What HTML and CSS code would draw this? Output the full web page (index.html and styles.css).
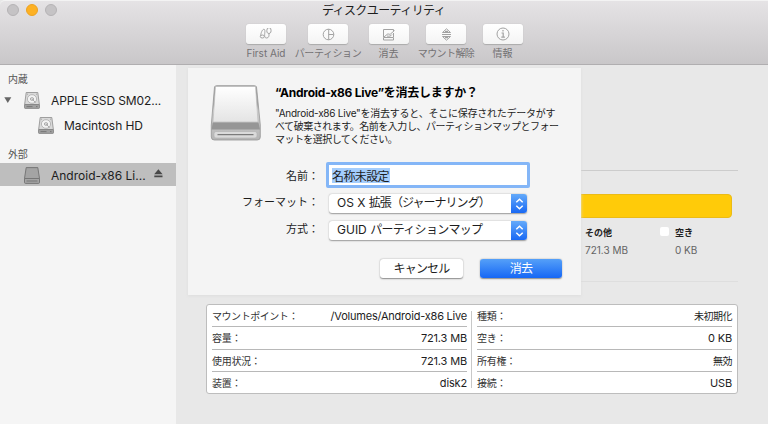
FILE: index.html
```html
<!DOCTYPE html>
<html lang="ja">
<head>
<meta charset="utf-8">
<title>ディスクユーティリティ</title>
<link rel="stylesheet" href="styles.css">
</head>
<body>
<svg class="defs" width="0" height="0">
  <defs>
    <linearGradient id="metal" x1="0" y1="0" x2="0" y2="1"><stop offset="0" stop-color="#fff"/><stop offset="1" stop-color="#e4e4e4"/></linearGradient>
    <linearGradient id="base" x1="0" y1="0" x2="0" y2="1"><stop offset="0" stop-color="#999"/><stop offset=".35" stop-color="#a5a5a5"/><stop offset=".45" stop-color="#d0d0d0"/><stop offset="1" stop-color="#b5b5b5"/></linearGradient>
    <symbol id="hdd" viewBox="0 0 16 17">
      <path d="M2.2.5h11.6l1.600 12.200H.6z" fill="#d9d9d9" stroke="#8b8b8b" stroke-width=".8"/>
      <rect x=".5" y="12.600" width="15" height="3.800" rx=".7" fill="#a2a2a2" stroke="#777" stroke-width=".7"/>
      <ellipse cx="8" cy="7" rx="4.600" ry="4.300" fill="#f3f3f3" stroke="#ababab" stroke-width=".8"/>
      <ellipse cx="8" cy="7" rx="1.700" ry="1.400" fill="#ddd" stroke="#999" stroke-width=".7"/>
      <path d="M8.300 7.200l3.200 3.400M3 2.200h1M12 2.200h1" stroke="#999" stroke-width=".8"/>
      <path d="M2.500 14.600h6M12 14.600h1.500" stroke="#6b6b6b" stroke-width=".8"/>
    </symbol>
  </defs>
</svg>
<div class="window">
  <header class="titlebar">
    <div class="lights"><i></i><i class="amber"></i><i></i></div>
    <h1>ディスクユーティリティ</h1>
    <nav class="toolbar">
      <div class="tool"><span class="tool-btn"><svg width="14" height="14" viewBox="0 0 14 14"><path d="M1.600 8.700C2 6 3.200 2.300 4.900 2.300c1.700 0 .7 3.500.7 6.200M8.300 1.500C7.200 4.500 8 6.500 9.900 6.500s2.700-2 1.800-5M8.300 1.500h1M10.700 1.500h1M9.900 6.500c.5 2.500-.4 4.500-2.200 4.500-1.500 0-2-1-2.100-2.500"/><ellipse cx="3.300" cy="9.500" rx="2" ry="1.500"/></svg></span><span class="tool-label">First Aid</span></div>
      <div class="tool"><span class="tool-btn"><svg width="13" height="13" viewBox="0 0 13 13"><circle cx="6.500" cy="6.500" r="5.300"/><path d="M6.700 1.200v10.600M6.700 6.500h5"/></svg></span><span class="tool-label partition">パーティション</span></div>
      <div class="tool"><span class="tool-btn"><svg width="13" height="13" viewBox="0 0 13 13"><path d="M11.500 3V1.500h-10v7.500M1.500 9.500h10v2.500h-10zM2 9l3-2.500c1-1.500 2.500.5 3.500-.5l4-3.500M5 8c2 .5 4 .2 5-1.500M11.500 5v4"/></svg></span><span class="tool-label">消去</span></div>
      <div class="tool"><span class="tool-btn"><svg width="13" height="13" viewBox="0 0 13 13"><path d="M2.500 4.500l4-3.700 4 3.700zM2 6.500h9M2.500 8.500h8l-4 3.700z"/><path d="M5 3.500h3M5 9.500h3" stroke-width="1.500"/></svg></span><span class="tool-label unmount">マウント解除</span></div>
      <div class="tool"><span class="tool-btn"><svg width="14" height="14" viewBox="0 0 14 14"><circle cx="7" cy="7" r="6"/><path d="M5.500 6h1.700v4M5.300 10.200h3.600" stroke-width="1.200"/><circle cx="7" cy="3.800" r=".5" stroke-width=".8"/></svg></span><span class="tool-label">情報</span></div>
    </nav>
  </header>
  <div class="content">
    <aside class="sidebar">
      <div class="group">内蔵</div>
      <div class="disk"><svg class="disclosure" width="8" height="7" viewBox="0 0 8 7"><path d="M.3.300h7L3.800 6z" fill="#666"/></svg><svg class="disk-icon" width="16" height="17"><use href="#hdd"/></svg><span class="ssd">APPLE SSD SM02...</span></div>
      <div class="disk child"><svg class="disk-icon" width="16" height="17"><use href="#hdd"/></svg><span class="mac">Macintosh HD</span></div>
      <div class="group second">外部</div>
      <div class="disk external"><svg class="disk-icon" width="16" height="17" viewBox="0 0 16 17"><path d="M2.200.6h11.600l1.700 10.800v4q0 1-1 1h-13q-1 0-1-1v-4z" fill="#a4a4a4" stroke="#707070" stroke-width=".9"/><path d="M.6 11.500h14.800M2.500 14h11" stroke="#707070" stroke-width=".9"/></svg><span class="android">Android-x86 Li...</span><svg class="eject" width="9" height="9" viewBox="0 0 9 9"><path d="M4.400.3L8.600 5.300H.2zM.3 6.500h8.200v1.700H.3z" fill="#484848"/></svg></div>
    </aside>
    <main class="main">
      <section class="usage">
        <div class="bar"></div>
        <div class="legend">
          <div class="key other"><b>その他</b><span>721.3 MB</span></div>
          <i class="swatch"></i>
          <div class="key"><b>空き</b><span>0 KB</span></div>
        </div>
      </section>
      <section class="info">
        <dl>
          <div><dt class="mount">マウントポイント：</dt><dd class="path">/Volumes/Android-x86 Live</dd></div>
          <div><dt>容量：</dt><dd>721.3 MB</dd></div>
          <div><dt>使用状況：</dt><dd>721.3 MB</dd></div>
          <div><dt>装置：</dt><dd>disk2</dd></div>
        </dl>
        <dl>
          <div><dt>種類：</dt><dd class="kanji">未初期化</dd></div>
          <div><dt>空き：</dt><dd>0 KB</dd></div>
          <div><dt>所有権：</dt><dd class="kanji">無効</dd></div>
          <div><dt>接続：</dt><dd>USB</dd></div>
        </dl>
      </section>
    </main>
  </div>
  <div class="sheet" role="dialog">
    <div class="intro">
      <svg class="drive" width="51" height="57" viewBox="0 0 51 57"><path d="M4.500 2Q5 .7 6.500.7h38Q46 .7 46.500 2l3.800 38v12q0 3-3 3h-43q-3 0-3-3V40z" fill="url(#base)" stroke="#959595" stroke-width=".8"/><path d="M5.500 1.500h40l2.500 35.500H3z" fill="url(#metal)" stroke="#bbb" stroke-width=".6"/><path d="M2.700 37.500h45.800l1.500 7H1.600z" fill="#969696"/><rect x="4" y="46.500" width="43" height="6.500" rx="2" fill="#dadada" stroke="#b4b4b4" stroke-width=".7"/><path d="M7.500 49.700h36" stroke="#666"/></svg>
      <div class="message">
        <h2>“Android-x86 Live”を消去しますか？</h2>
        <p><span class="l1">"Android-x86 Live"を消去すると、そこに保存されたデータがす</span><br><span class="l2">べて破棄されます。名前を入力し、パーティションマップとフォー</span><br><span class="l3">マットを選択してください。</span></p>
      </div>
    </div>
    <div class="form">
      <label class="name">名前：</label><div class="input"><span>名称未設定</span></div>
      <label class="format">フォーマット：</label><div class="select"><span>OS X <span class="os">拡張（ジャーナリング）</span></span><i><svg width="9" height="12" viewBox="0 0 9 12"><path d="M1.300 4.300l3.200-3 3.200 3M1.300 7.700l3.200 3 3.200-3"/></svg></i></div>
      <label>方式：</label><div class="select"><span>GUID <span class="guid">パーティションマップ</span></span><i><svg width="9" height="12" viewBox="0 0 9 12"><path d="M1.300 4.300l3.200-3 3.200 3M1.300 7.700l3.200 3 3.200-3"/></svg></i></div>
    </div>
    <div class="actions"><button class="cancel">キャンセル</button><button class="primary">消去</button></div>
  </div>
</div>
</body>
</html>
```

FILE: styles.css
```css
* { box-sizing: border-box; }
body { margin: 0; font-family: Inter, "Noto Sans CJK JP", sans-serif; font-size: 12px; color: #1d1d1d; white-space: nowrap; }
h1, h2, p, dl, dt, dd { margin: 0; }
svg { display: block; flex: none; }
.defs { position: absolute; }
.window { position: relative; width: 768px; height: 424px; overflow: hidden; background: #e8e8e8; display: flex; flex-direction: column; }
.titlebar { height: 65px; flex: none; background: linear-gradient(#e5e3e5, #c9c7c9); border-top: 1px solid #f3f3f3; border-bottom: 1px solid #b0aeb0; border-radius: 5px 0 0; display: grid; grid-template-columns: 235px 1fr; grid-template-rows: 23px 1fr; }
.lights { display: flex; gap: 7px; padding: 3px 0 0 7px; }
.lights i { width: 12px; height: 12px; border-radius: 50%; background: #c5c3c5; border: 1px solid #b5b3b5; }
.lights .amber { background: #fdb124; border-color: #eda321; }
h1 { font-size: 12px; font-weight: 400; line-height: 20px; padding-left: 87px; letter-spacing: -.6px; }
.toolbar { grid-column: 2; display: grid; grid-template-columns: 62px 62px 59px 56px 57px; }
.tool { display: flex; flex-direction: column; align-items: center; }
.tool-btn { width: 40px; height: 20px; border-radius: 3px; background: linear-gradient(#fff, #f4f4f4); box-shadow: 0 .5px 1px #aaa; display: flex; align-items: center; justify-content: center; }
.tool-btn svg { fill: none; stroke: #a2a2a2; stroke-width: 1; }
.tool-label { font-size: 10px; line-height: 14px; margin-top: 2px; color: #737173; }
.partition { letter-spacing: -.4px; }
.unmount { letter-spacing: -.6px; }
.content { flex: 1; display: flex; }
.sidebar { width: 176px; background: #f5f5f5; padding-top: 4px; }
.group { height: 19px; line-height: 20px; padding-left: 8px; font-size: 10px; letter-spacing: -.3px; color: #555; }
.group.second { margin-top: 6px; }
.disk { display: flex; align-items: center; height: 25px; padding-left: 4px; font-size: 12px; }
.ssd { letter-spacing: -.12px; }
.mac { letter-spacing: -.08px; }
.disclosure { margin-right: 12px; }
.disk-icon { margin-right: 11px; }
.child { padding-left: 38px; }
.child .disk-icon { margin-right: 10px; }
.external { height: 23px; padding: 1px 0 0 24px; background: #bebebe; }
.eject { margin: -4px 0 0 8px; }
.main { flex: 1; padding: 105px 30px 0; }
.usage { height: 112px; border-top: 1px solid #ccc; border-bottom: 1px solid #dedede; padding: 23px 6px 0 0; }
.bar { height: 24px; background: #ffcb09; border: 1px solid #ebbb16; border-radius: 4px; }
.legend { display: flex; padding: 7px 0 0 379px; font-size: 10px; line-height: 15px; }
.key { display: flex; flex-direction: column; gap: 3px; color: #646464; }
.key b { color: #222; font-size: 9px; }
.other { width: 75px; }
.swatch { width: 9px; height: 9px; border-radius: 2px; background: #fff; margin: 2px 6px 0 0; }
.info { width: 532px; height: 90px; margin-top: 22px; background: #fff; border: 1px solid #bdbdbd; border-radius: 3px; display: flex; padding: 0 5px; font-size: 11px; }
dl { width: 255px; }
dl + dl { position: relative; margin-left: 10px; }
dl + dl::before { content: ""; position: absolute; left: -6px; top: 6px; height: 77px; border-left: 1px solid #c8c8c8; }
dl div { display: flex; justify-content: space-between; height: 22.4px; line-height: 22px; border-bottom: 1px solid #b8b8b8; }
dl div:last-child { border: 0; }
dt { font-size: 10px; color: #333; letter-spacing: -.3px; }
dt.mount { letter-spacing: -.45px; }
dd { letter-spacing: -.15px; }
dd.path { letter-spacing: -.22px; }
dd.kanji { font-size: 10px; letter-spacing: -.5px; }
.sheet { position: absolute; left: 188px; top: 68px; width: 393px; height: 227px; background: #f4f4f4; box-shadow: 0 1px 3px #ddd; padding: 16px 19px 0 22px; }
.intro { display: flex; gap: 14px; height: 78px; }
.drive { margin-top: 1px; }
h2 { font-size: 12px; line-height: 17px; font-weight: 700; color: #000; letter-spacing: -.24px; }
.message p { font-size: 10px; line-height: 13px; margin-top: 6px; }
.l1 { letter-spacing: -.24px; }
.l2 { letter-spacing: -.48px; }
.l3 { letter-spacing: -.55px; }
.form { display: grid; grid-template-columns: 113px 198px; column-gap: 6px; row-gap: 8px; grid-template-rows: 23px 19px 19px; }
label { text-align: right; line-height: 19px; font-size: 11px; padding-right: 4px; }
.name { line-height: 28px; }
.input { height: 26px; width: 204px; margin-left: -3px; border: 3px solid #84b6f7; border-radius: 2px; background: #fff; padding: 3px; }
.input span { background: #a4cdfd; display: block; width: 58px; height: 15px; line-height: 17px; font-size: 12px; letter-spacing: -.6px; }
.select { height: 19px; margin-top: 1px; background: #fff; border-radius: 3px; box-shadow: 0 .5px 1.500px #999; display: flex; justify-content: space-between; line-height: 18px; padding-left: 8px; }
.os { letter-spacing: -.95px; }
.guid { letter-spacing: -.7px; }
.select i { width: 16px; border-radius: 0 3px 3px 0; background: linear-gradient(#64aafa, #1969f4); display: flex; align-items: center; justify-content: center; }
.select path { fill: none; stroke: #fff; stroke-width: 1.500; }
.actions { display: flex; justify-content: flex-end; gap: 17px; margin-top: 20px; }
button { width: 83px; height: 19px; border: 0; border-radius: 3px; background: #fff; box-shadow: 0 .5px 1.500px #888; font: 12px/18px Inter, "Noto Sans CJK JP", sans-serif; letter-spacing: -.8px; padding: 0; color: #1d1d1d; }
.primary { background: linear-gradient(#55a0f8, #1667f5); color: #fff; width: 82px; }
```
